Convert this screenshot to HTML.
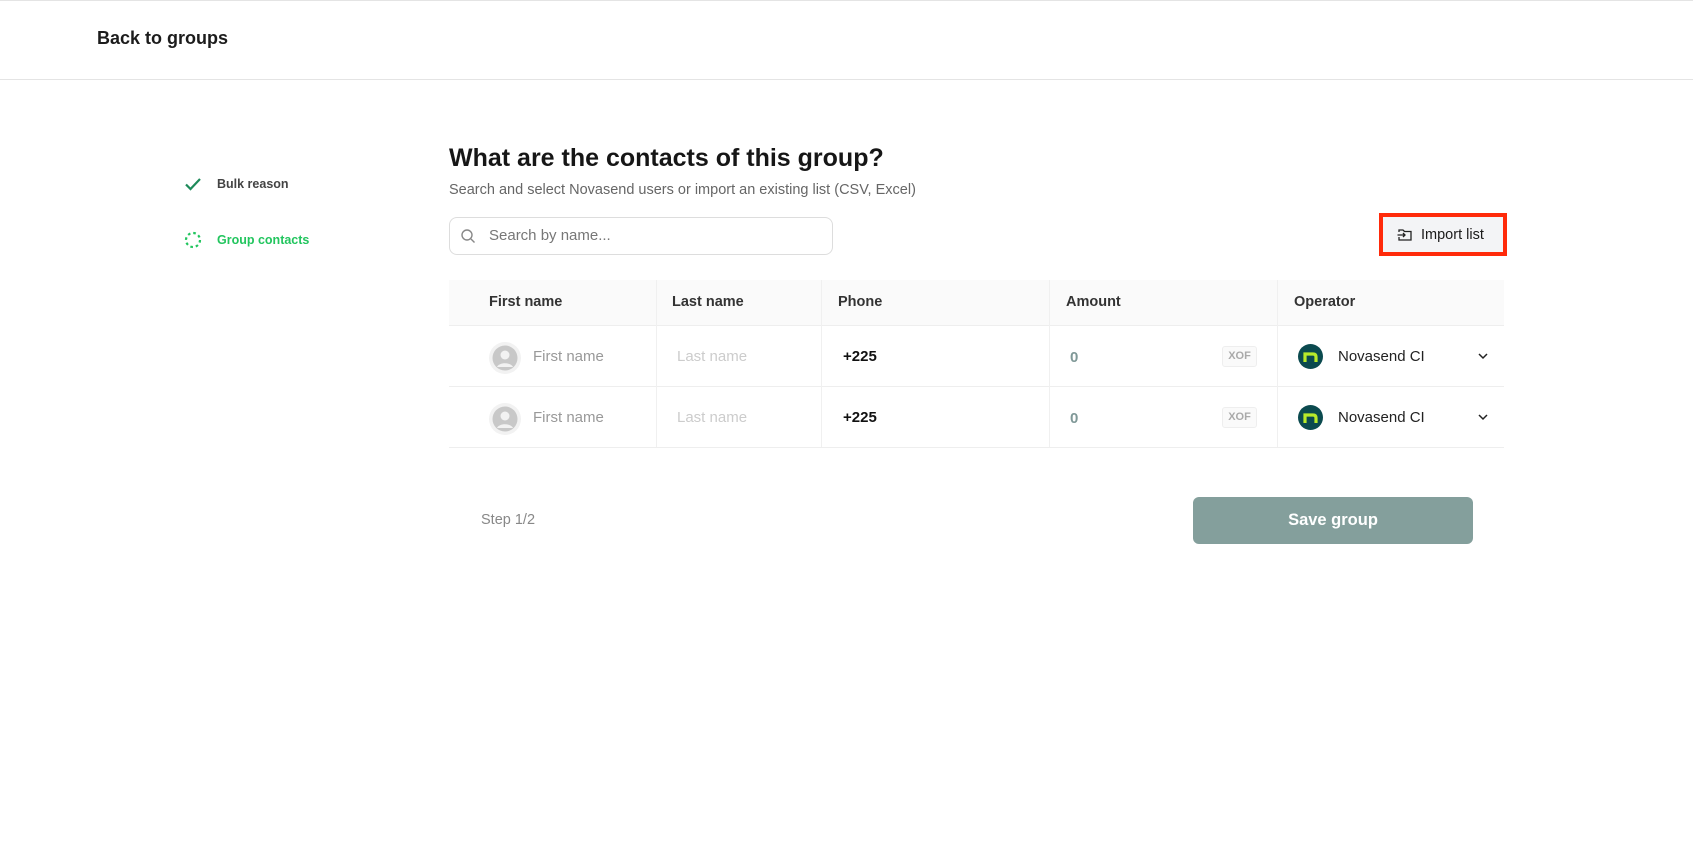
<!DOCTYPE html>
<html><head><meta charset="utf-8"><style>
*{box-sizing:border-box;margin:0;padding:0}
body{width:1693px;height:859px;background:#fff;font-family:"Liberation Sans",sans-serif;position:relative;overflow:hidden;color:#1a1a1a}
.a{position:absolute;white-space:nowrap}
.hdr{left:0;top:0;width:1693px;height:80px;border-top:1px solid #e4e4e4;border-bottom:1px solid #e4e4e4}
.th{background:#fafafa;border-bottom:1px solid #eee;}
.vl{position:absolute;width:1px;background:#f0f0f0}
</style></head><body>
<div class="a hdr"></div>
<div class="a" style="left:97px;top:28px;font-size:18px;font-weight:bold;color:#1c1c1c">Back to groups</div>

<svg class="a" style="left:184px;top:175px" width="18" height="18" viewBox="0 0 18 18"><path d="M2 9.5l4.5 4.5L16 4" fill="none" stroke="#1e8a5a" stroke-width="2.2"/></svg>
<div class="a" style="left:217px;top:177px;font-size:12.5px;font-weight:bold;color:#444">Bulk reason</div>
<svg class="a" style="left:184px;top:231px" width="18" height="18" viewBox="0 0 18 18"><circle cx="9" cy="9" r="7" fill="none" stroke="#22c55e" stroke-width="2.2" stroke-dasharray="2.6 2.9"/></svg>
<div class="a" style="left:217px;top:233px;font-size:12.5px;font-weight:bold;color:#22c55e">Group contacts</div>

<div class="a" style="left:449px;top:144px;font-size:25px;font-weight:bold;color:#161616">What are the contacts of this group?</div>
<div class="a" style="left:449px;top:182px;font-size:14.5px;color:#666">Search and select Novasend users or import an existing list (CSV, Excel)</div>

<div class="a" style="left:449px;top:217px;width:384px;height:38px;border:1px solid #ddd;border-radius:8px"></div>
<svg class="a" style="left:460px;top:228px" width="16" height="16" viewBox="0 0 16 16"><circle cx="7" cy="7" r="5" fill="none" stroke="#888" stroke-width="1.4"/><path d="M11 11l3.5 3.5" stroke="#888" stroke-width="1.4"/></svg>
<div class="a" style="left:489px;top:227px;font-size:15px;color:#777">Search by name...</div>

<div class="a" style="left:1379px;top:213px;width:128px;height:43px;border:4px solid #ff2a0a;background:#f3f4f6"></div>
<svg class="a" style="left:1397px;top:228px" width="16" height="14" viewBox="0 0 16 14"><path d="M2 4V2h4l1.5 1.5H14V12H2V9" fill="none" stroke="#222" stroke-width="1.3"/><path d="M0.5 7H8M6 5l2 2-2 2" fill="none" stroke="#222" stroke-width="1.3"/></svg>
<div class="a" style="left:1421px;top:227px;font-size:14.5px;color:#1a1a1a">Import list</div>

<div class="a th" style="left:449px;top:280px;width:1055px;height:46px"></div>
<div class="a" style="left:449px;top:386px;width:1055px;height:1px;background:#eee"></div>
<div class="a" style="left:449px;top:447px;width:1055px;height:1px;background:#eee"></div>
<div class="vl" style="left:656px;top:280px;height:167px"></div>
<div class="vl" style="left:821px;top:280px;height:167px"></div>
<div class="vl" style="left:1049px;top:280px;height:167px"></div>
<div class="vl" style="left:1277px;top:280px;height:167px"></div>

<div class="a" style="left:489px;top:294px;font-size:14.5px;font-weight:bold;color:#333">First name</div>
<div class="a" style="left:672px;top:294px;font-size:14.5px;font-weight:bold;color:#333">Last name</div>
<div class="a" style="left:838px;top:294px;font-size:14.5px;font-weight:bold;color:#333">Phone</div>
<div class="a" style="left:1066px;top:294px;font-size:14.5px;font-weight:bold;color:#333">Amount</div>
<div class="a" style="left:1294px;top:294px;font-size:14.5px;font-weight:bold;color:#333">Operator</div>

<div class="a" style="left:0;top:326px">
 <svg class="a" style="left:489px;top:16px" width="32" height="32" viewBox="0 0 32 32"><circle cx="16" cy="16" r="16" fill="#f2f2f2"/><circle cx="16" cy="16" r="12.5" fill="#c8c8c8"/><circle cx="16" cy="13" r="4.5" fill="#f2f2f2"/><path d="M8 25c2-5 14-5 16 0" fill="#f2f2f2"/></svg>
 <div class="a" style="left:533px;top:22px;font-size:15px;color:#999">First name</div>
 <div class="a" style="left:677px;top:22px;font-size:15px;color:#ccc">Last name</div>
 <div class="a" style="left:843px;top:22px;font-size:15px;font-weight:bold;color:#111">+225</div>
 <div class="a" style="left:1070px;top:23px;font-size:15px;font-weight:bold;color:#7f9897">0</div>
 <div class="a" style="left:1222px;top:20px;width:35px;height:21px;border:1px solid #eee;border-radius:3px;background:#fafafa;font-size:11px;font-weight:bold;color:#aaa;text-align:center;line-height:19px">XOF</div>
 <svg class="a" style="left:1298px;top:18px" width="25" height="25" viewBox="0 0 25 25"><circle cx="12.5" cy="12.5" r="12.5" fill="#0b4a4f"/><path d="M7 18V10h8c2 0 3 1 3 3v5" fill="none" stroke="#b8ea2a" stroke-width="3.2"/></svg>
 <div class="a" style="left:1338px;top:22px;font-size:15px;color:#222">Novasend CI</div>
 <svg class="a" style="left:1477px;top:26px" width="12" height="8" viewBox="0 0 12 8"><path d="M2 2l4 4 4-4" fill="none" stroke="#222" stroke-width="1.5"/></svg>
</div>
<div class="a" style="left:0;top:387px">
 <svg class="a" style="left:489px;top:16px" width="32" height="32" viewBox="0 0 32 32"><circle cx="16" cy="16" r="16" fill="#f2f2f2"/><circle cx="16" cy="16" r="12.5" fill="#c8c8c8"/><circle cx="16" cy="13" r="4.5" fill="#f2f2f2"/><path d="M8 25c2-5 14-5 16 0" fill="#f2f2f2"/></svg>
 <div class="a" style="left:533px;top:22px;font-size:15px;color:#999">First name</div>
 <div class="a" style="left:677px;top:22px;font-size:15px;color:#ccc">Last name</div>
 <div class="a" style="left:843px;top:22px;font-size:15px;font-weight:bold;color:#111">+225</div>
 <div class="a" style="left:1070px;top:23px;font-size:15px;font-weight:bold;color:#7f9897">0</div>
 <div class="a" style="left:1222px;top:20px;width:35px;height:21px;border:1px solid #eee;border-radius:3px;background:#fafafa;font-size:11px;font-weight:bold;color:#aaa;text-align:center;line-height:19px">XOF</div>
 <svg class="a" style="left:1298px;top:18px" width="25" height="25" viewBox="0 0 25 25"><circle cx="12.5" cy="12.5" r="12.5" fill="#0b4a4f"/><path d="M7 18V10h8c2 0 3 1 3 3v5" fill="none" stroke="#b8ea2a" stroke-width="3.2"/></svg>
 <div class="a" style="left:1338px;top:22px;font-size:15px;color:#222">Novasend CI</div>
 <svg class="a" style="left:1477px;top:26px" width="12" height="8" viewBox="0 0 12 8"><path d="M2 2l4 4 4-4" fill="none" stroke="#222" stroke-width="1.5"/></svg>
</div>

<div class="a" style="left:481px;top:512px;font-size:14.5px;color:#888">Step 1/2</div>
<div class="a" style="left:1193px;top:497px;width:280px;height:47px;border-radius:6px;background:#849f9c;color:#fff;font-size:16.5px;font-weight:bold;text-align:center;line-height:47px">Save group</div>
</body></html>
